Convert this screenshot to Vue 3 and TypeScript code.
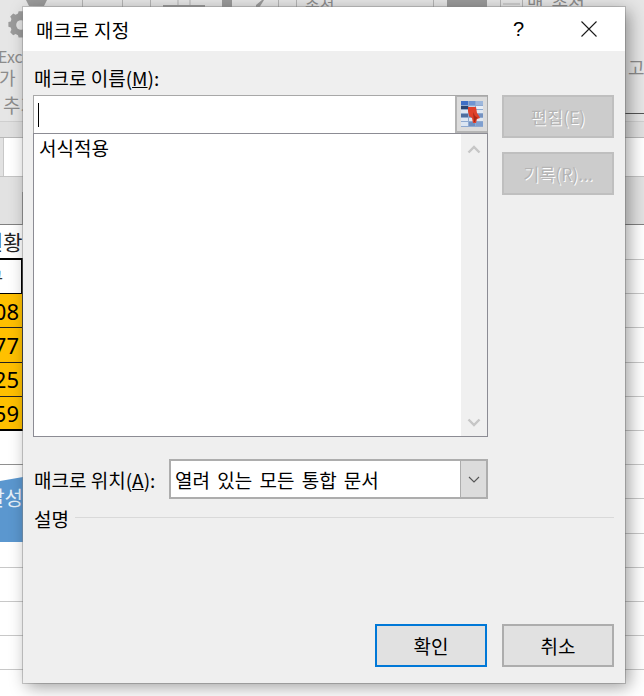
<script setup lang="ts">
interface SheetRow { left: string; kind: string }
const rows: SheetRow[] = [
  { left: '현황', kind: 'title' },
  { left: '구', kind: 'head' },
  { left: '108', kind: 'data' },
  { left: '177', kind: 'data' },
  { left: '125', kind: 'data' },
  { left: '159', kind: 'data last' },
  { left: '', kind: 'gap' },
  { left: '', kind: 'plain' },
  { left: '', kind: 'plain strong' },
  { left: '', kind: 'plain' },
  { left: '', kind: 'plain' },
  { left: '', kind: 'plain' },
  { left: '', kind: 'plain' },
]
const rowBands = [
  { y: 0, h: 5, c: ['#3f6fc6', '#6f95d2', '#9db7dc'] },
  { y: 5, h: 4, c: ['#2a4470', '#c3d2e6', '#e8eef7'] },
  { y: 9, h: 4, c: ['#dfe7f2', '#dfe7f2', '#dfe7f2'] },
  { y: 13, h: 4, c: ['#4f6f9f', '#5f7dab', '#7592c0'] },
  { y: 17, h: 4, c: ['#dfe7f2', '#dfe7f2', '#dfe7f2'] },
  { y: 21, h: 5, c: ['#dbe5f2', '#6f8fc0', '#7f9fd0'] },
]
const colX = [0, 8, 15]
const colW = [7, 6, 7]
</script>

<template>
  <div class="page">
    <div class="backdrop">
      <svg class="ribbon" width="644" height="121" viewBox="0 0 644 121">
        <g fill="#9b9b9b">
          <g transform="translate(8.4 4) scale(.6)">
            <path d="M17 12h8l1 4 4 2 4-2 5 5-2 4 1 4 4 1v8l-4 1-1 4 2 4-5 5-4-2-4 2-1 4h-8l-1-4-4-2-4 2-5-5 2-4-1-4-4-1v-8l4-1 1-4-2-4 5-5 4 2 4-2z" />
            <circle cx="21" cy="35" r="8" fill="#e6e6e6" />
          </g>
          <path d="M26 0h21l-3 6H29z" />
          <path d="M222 0h10v8h-10zM256 5l6-5h2l-5 8h-3zM447 0h40v8h-40z" />
          <rect x="163" y="5" width="42" height="3" />
        </g>
        <g stroke="#b5b5b5" fill="none">
          <path d="M82.5 0v7M122.5 0v7M150.5 0v7M278.5 0v7M433.5 0v7M178 5V0M190 5V0M296.5 0v7M500.5 0v7M522.5 0v7M503 4h17" />
        </g>
        <g class="scrap">
          <text x="-2" y="63" font-size="16">Exce</text>
          <text x="-1" y="85" font-size="18">가</text>
          <text x="3" y="113" font-size="19">추가</text>
          <text x="628" y="75" font-size="18">고</text>
          <text x="305" y="12" font-size="16">속성</text>
          <text x="527" y="12" font-size="18" word-spacing="4">맵 속성</text>
        </g>
        <rect x="610" y="113" width="34" height="1" fill="#555" />
      </svg>
      <div class="strip"></div>
      <div class="namebar"><div class="namebox"></div></div>
      <div class="tabs"></div>
      <div class="sheet">
        <div v-for="(row, i) in rows" :key="i" class="row" :class="row.kind">
          <div class="cell">{{ row.left }}</div>
          <div class="rest"></div>
        </div>
        <div class="callout">달성</div>
      </div>
    </div>

    <div class="dialog">
      <header class="titlebar">
        <span class="title">매크로 지정</span>
        <span class="help">?</span>
        <svg class="close" width="18" height="18" viewBox="0 0 18 18">
          <path d="M1.5 1.5l15 15M16.5 1.5l-15 15" stroke="#1a1a1a" stroke-width="1.1" fill="none" />
        </svg>
      </header>
      <div class="body">
        <label class="namelabel">매크로 이름(<u>M</u>):</label>
        <div class="main">
          <div class="leftcol">
            <div class="namefield">
              <div class="inputarea"><i class="caret"></i></div>
              <div class="picker">
                <svg width="22" height="26" viewBox="0 0 22 26">
                  <rect width="22" height="26" fill="#8faad0" />
                  <g v-for="band in rowBands" :key="band.y">
                    <rect v-for="(x, i) in colX" :key="i" :x="x" :y="band.y" :width="colW[i]" :height="band.h - 1" :fill="band.c[i]" />
                  </g>
                  <path d="M7 6h8l1 6 2 3 1 2-3 1-1 4h-3l-1-5-3-2-1-5z" fill="#e0412a" />
                  <path d="M12 11l2 4 3 2-2 1-1 3h-1z" fill="#a82a18" />
                </svg>
              </div>
            </div>
            <div class="listbox">
              <div class="items">서식적용</div>
              <div class="scroll">
                <svg width="14" height="9" viewBox="0 0 14 9"><path d="M1.5 7.5L7 2l5.5 5.5" stroke="#c6c6c6" stroke-width="2.4" fill="none" /></svg>
                <svg width="14" height="9" viewBox="0 0 14 9"><path d="M1.5 1.5L7 7l5.5-5.5" stroke="#c6c6c6" stroke-width="2.4" fill="none" /></svg>
              </div>
            </div>
          </div>
          <div class="actions">
            <button class="btn off">편집(E)</button>
            <button class="btn off">기록(R)...</button>
          </div>
        </div>
        <div class="location">
          <label class="loclabel">매크로 위치(<u>A</u>):</label>
          <div class="select">
            <span class="value">열려 있는 모든 통합 문서</span>
            <span class="arrow">
              <svg width="12" height="7" viewBox="0 0 12 7"><path d="M1 1l5 5 5-5" stroke="#555" stroke-width="1.1" fill="none" /></svg>
            </span>
          </div>
        </div>
        <div class="desc">
          <span>설명</span>
          <i class="rule"></i>
        </div>
        <footer class="footer">
          <button class="btn primary">확인</button>
          <button class="btn">취소</button>
        </footer>
      </div>
    </div>
  </div>
</template>

<style scoped>
.page {
  position: relative;
  width: 644px;
  height: 696px;
  overflow: hidden;
  background: #fff;
  font-family: "Noto Sans CJK KR", "Noto Sans", sans-serif;
  color: #000;
}
.backdrop {
  display: flex;
  flex-direction: column;
  height: 100%;
}
.ribbon {
  display: block;
  flex: none;
  background: #e6e6e6;
}
.scrap text {
  fill: #8c8c8c;
  font-family: "Noto Sans CJK KR", sans-serif;
}
.strip {
  flex: none;
  height: 16px;
  background: #e0e0e0;
  border-top: 1px solid #cfcfcf;
  box-sizing: border-box;
}
.namebar {
  flex: none;
  height: 39px;
  background: #fff;
  border-top: 1px solid #b8b8b8;
  box-sizing: border-box;
  display: flex;
}
.namebox {
  width: 3px;
  background: #e2e2e2;
  border-right: 1px solid #c8c8c8;
}
.tabs {
  flex: none;
  height: 49px;
  background: linear-gradient(#8a8a8a, #8a8a8a) 22px 15px / 1px 34px no-repeat, #e2e2e2;
  border-top: 1px solid #c4c4c4;
  border-bottom: 1px solid #808080;
  box-sizing: border-box;
}
.sheet {
  position: relative;
  flex: 1;
  min-height: 0;
}
.row {
  display: flex;
  height: 34.2px;
  box-sizing: border-box;
}
.row.title {
  height: 35px;
}
.cell {
  flex: none;
  width: 23px;
  display: flex;
  justify-content: flex-end;
  align-items: center;
  overflow: hidden;
  white-space: nowrap;
  box-sizing: border-box;
  font-size: 20px;
  line-height: 1;
}
.rest {
  flex: 1;
  border-bottom: 1px solid #c8c8c8;
  background: repeating-linear-gradient(90deg, transparent 0 103px, #c8c8c8 103px 104px);
  background-position: 50px 0;
}
.title .cell {
  border-bottom: 2px solid #000;
  font-size: 21px;
  color: #222;
}
.head .cell {
  border-right: 2px solid #000;
  border-bottom: 1px solid #000;
  color: #333;
  font-size: 18px;
  padding-right: 18px;
}
.data .cell {
  background: #ffc000;
  border-right: 1px solid #000;
  border-bottom: 1px solid #222;
  font-family: "Noto Sans", sans-serif;
  font-size: 22px;
  padding-right: 3px;
}
.data.last .cell {
  border-bottom: 2px solid #000;
}
.gap .cell {
  border-bottom: 1px solid #909090;
}
.plain .cell {
  border-bottom: 1px solid #c8c8c8;
}
.plain.strong .cell {
  border-bottom: 1px solid #808080;
}
.callout {
  position: absolute;
  left: 0;
  top: 252px;
  width: 23px;
  height: 65px;
  background: #5b97cf;
  clip-path: polygon(0 4px, 100% 0, 100% 100%, 0 100%);
  color: #e8f1f9;
  font-size: 20px;
  line-height: 42px;
  overflow: hidden;
  display: flex;
  justify-content: flex-end;
  white-space: nowrap;
}
.dialog {
  position: absolute;
  left: 23px;
  top: 7px;
  width: 602px;
  height: 676px;
  display: flex;
  flex-direction: column;
  background: #efefef;
  box-shadow: 4px 4px 16px rgba(0, 0, 0, 0.38), 0 0 0 1px rgba(150, 150, 150, 0.45);
}
.titlebar {
  flex: none;
  height: 44px;
  display: flex;
  align-items: center;
  background: #fff;
  padding-left: 13px;
}
.title {
  font-size: 19px;
  letter-spacing: 0.3px;
  flex: 1;
}
.help {
  font-family: "Liberation Sans", sans-serif;
  font-size: 20px;
  width: 67px;
}
.close {
  margin-right: 27px;
}
.body {
  flex: 1;
  min-height: 0;
  display: flex;
  flex-direction: column;
  padding: 15px 11px 16px 10px;
}
.namelabel,
.loclabel {
  font-size: 19px;
  line-height: 24px;
  white-space: nowrap;
}
.namelabel {
  margin-left: 1px;
  height: 29px;
}
.main {
  display: flex;
  gap: 14px;
}
.leftcol {
  width: 455px;
  flex: none;
}
.namefield {
  display: flex;
  height: 38px;
  box-sizing: border-box;
  border: 1px solid #a8a8a8;
  border-bottom: 0;
  background: #fff;
}
.inputarea {
  flex: 1;
  display: flex;
  align-items: center;
  padding-left: 4px;
}
.caret {
  width: 1px;
  height: 24px;
  background: #000;
}
.picker {
  width: 32px;
  flex: none;
  background: #dcdcdc;
  border: 2px solid #b4b4b4;
  border-right: 0;
  border-top: 1px solid #b4b4b4;
  box-sizing: border-box;
  display: flex;
  align-items: center;
  justify-content: center;
}
.listbox {
  display: flex;
  height: 304px;
  box-sizing: border-box;
  border: 1px solid #8c8c94;
  background: #fff;
}
.items {
  flex: 1;
  font-size: 19px;
  line-height: 24px;
  padding: 2px 0 0 5px;
}
.scroll {
  width: 26px;
  flex: none;
  background: #f0f0f0;
  display: flex;
  flex-direction: column;
  justify-content: space-between;
  align-items: center;
  padding: 11px 0 9px;
  box-sizing: border-box;
}
.actions {
  width: 112px;
  display: flex;
  flex-direction: column;
  gap: 14px;
}
.btn {
  width: 112px;
  height: 43px;
  box-sizing: border-box;
  border: 2px solid #adadad;
  background: #e1e1e1;
  font-family: inherit;
  font-size: 19px;
  color: #000;
  padding: 0;
}
.btn.off {
  font-size: 17.5px;
  background: #cccccc;
  border-color: #bfbfbf;
  color: #b4b4b4;
  text-shadow: 1px 1px 0 #fff;
}
.btn.primary {
  border-color: #0078d7;
}
.location {
  display: flex;
  align-items: center;
  margin-top: 22px;
}
.loclabel {
  width: 135px;
  flex: none;
  margin-left: 1px;
  padding-top: 2px;
}
.select {
  width: 319px;
  height: 40px;
  box-sizing: border-box;
  border: 2px solid #adadad;
  background: #fff;
  display: flex;
  align-items: center;
  flex: none;
}
.value {
  flex: 1;
  font-size: 19px;
  word-spacing: 3px;
  padding-left: 4px;
  white-space: nowrap;
}
.arrow {
  width: 25px;
  flex: none;
  height: 100%;
  background: #dcdcdc;
  border-left: 1px solid #adadad;
  display: flex;
  align-items: center;
  justify-content: center;
}
.desc {
  display: flex;
  align-items: center;
  height: 24px;
  margin-top: 7px;
  font-size: 19px;
  padding-left: 1px;
}
.rule {
  flex: 1;
  height: 1px;
  background: #d9d9d9;
  margin-left: 6px;
  margin-bottom: 2px;
}
.footer {
  margin-top: auto;
  display: flex;
  justify-content: flex-end;
  gap: 15px;
}
</style>
